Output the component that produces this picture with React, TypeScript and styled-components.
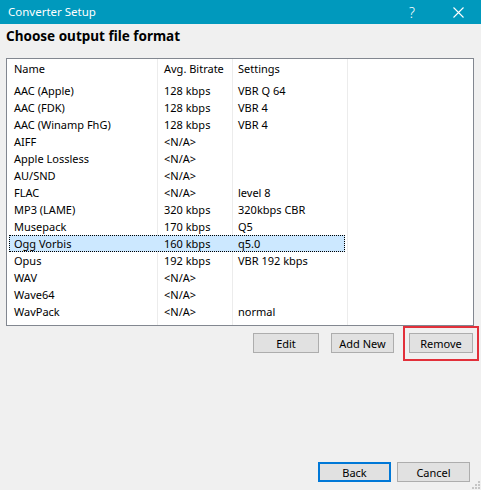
import React, { FC } from 'react';
import styled, { createGlobalStyle } from 'styled-components';

interface Format {
  name: string;
  bitrate: string;
  settings: string;
}

const formats: Format[] = [
  { name: 'AAC (Apple)', bitrate: '128 kbps', settings: 'VBR Q 64' },
  { name: 'AAC (FDK)', bitrate: '128 kbps', settings: 'VBR 4' },
  { name: 'AAC (Winamp FhG)', bitrate: '128 kbps', settings: 'VBR 4' },
  { name: 'AIFF', bitrate: '<N/A>', settings: '' },
  { name: 'Apple Lossless', bitrate: '<N/A>', settings: '' },
  { name: 'AU/SND', bitrate: '<N/A>', settings: '' },
  { name: 'FLAC', bitrate: '<N/A>', settings: 'level 8' },
  { name: 'MP3 (LAME)', bitrate: '320 kbps', settings: '320kbps CBR' },
  { name: 'Musepack', bitrate: '170 kbps', settings: 'Q5' },
  { name: 'Ogg Vorbis', bitrate: '160 kbps', settings: 'q5.0' },
  { name: 'Opus', bitrate: '192 kbps', settings: 'VBR 192 kbps' },
  { name: 'WAV', bitrate: '<N/A>', settings: '' },
  { name: 'Wave64', bitrate: '<N/A>', settings: '' },
  { name: 'WavPack', bitrate: '<N/A>', settings: 'normal' },
];

const selected = 'Ogg Vorbis';

const App: FC = () => (
  <>
    <GlobalStyle />
    <Window>
      <TitleBar>
        <Title>Converter Setup</Title>
        <TitleButtons>
          <TitleButton>?</TitleButton>
          <TitleButton>
            <svg width="11" height="11" viewBox="0 0 11 11">
              <path d="M0.5 0.5 L10.5 10.5 M10.5 0.5 L0.5 10.5" stroke="#fff" strokeWidth="1.1" />
            </svg>
          </TitleButton>
        </TitleButtons>
      </TitleBar>

      <Content>
        <Heading>Choose output file format</Heading>

        <ListBox>
          <Row>
            <Cell pad={5}>Name</Cell>
            <Cell pad={7}>Avg. Bitrate</Cell>
            <Cell pad={6}>Settings</Cell>
          </Row>
          <HeaderGap />
          {formats.map(f => (
            <Row key={f.name} isSelected={f.name === selected}>
              <Cell pad={5}>{f.name}</Cell>
              <Cell pad={7}>{f.bitrate}</Cell>
              <Cell pad={6}>{f.settings}</Cell>
            </Row>
          ))}
        </ListBox>

        <ActionRow>
          <Button width={66}>Edit</Button>
          <Button width={63}>Add New</Button>
          <Highlight>
            <Button width={64}>Remove</Button>
          </Highlight>
        </ActionRow>

        <Spacer />

        <FooterRow>
          <Button width={73} isDefault>
            Back
          </Button>
          <Button width={73}>Cancel</Button>
        </FooterRow>
      </Content>
      <Grip>
        <svg width="10" height="10" viewBox="0 0 10 10">
          {[
            [8, 2],
            [5, 5],
            [8, 5],
            [2, 8],
            [5, 8],
            [8, 8],
          ].map(([x, y]) => (
            <rect key={`${x}-${y}`} x={x} y={y} width="2" height="2" fill="#c5c5c5" />
          ))}
        </svg>
      </Grip>
    </Window>
  </>
);

export default App;

const GlobalStyle = createGlobalStyle`
  html, body {
    margin: 0;
    padding: 0;
    background: #f0f0f0;
  }
  body {
    font-family: "Noto Sans", "Open Sans", sans-serif;
    font-size: 11px;
    color: #000;
  }
`;

const Window = styled.div`
  position: relative;
  width: 481px;
  height: 490px;
  display: flex;
  flex-direction: column;
  background: #f0f0f0;
  overflow: hidden;
`;

const TitleBar = styled.div`
  height: 24px;
  flex: none;
  background: #0099bd;
  color: #fff;
  display: flex;
  align-items: center;
  justify-content: space-between;
  padding-left: 8px;
`;

const Title = styled.div`
  font-size: 11.5px;
  line-height: 24px;
`;

const TitleButtons = styled.div`
  display: flex;
  height: 100%;
`;

const TitleButton = styled.div`
  width: 46px;
  display: flex;
  align-items: center;
  justify-content: center;
  font-size: 14px;
  font-weight: 300;
`;

const Content = styled.div`
  flex: 1;
  display: flex;
  flex-direction: column;
  padding: 0 0 8px 6px;
`;

const Heading = styled.h1`
  margin: 0;
  height: 34px;
  line-height: 25px;
  font-size: 13.5px;
  font-weight: 700;
  box-sizing: border-box;
`;

const ListBox = styled.div`
  width: 468px;
  height: 268px;
  box-sizing: border-box;
  border: 1px solid #828790;
  background-color: #fff;
  background-image: linear-gradient(#ececec, #ececec), linear-gradient(#ececec, #ececec),
    linear-gradient(#ececec, #ececec);
  background-size: 1px 100%;
  background-repeat: no-repeat;
  background-position: 150px 0, 225px 0, 340px 0;
  padding: 1px 0 0 2px;
  display: flex;
  flex-direction: column;
`;

const HeaderGap = styled.div`
  height: 5px;
`;

const Row = styled.div<{ isSelected?: boolean }>`
  display: grid;
  grid-template-columns: 148px 75px 113px;
  width: 336px;
  height: 17px;
  box-sizing: border-box;
  align-items: center;
  background: ${p => (p.isSelected ? '#cce8ff' : 'transparent')};
  outline: ${p => (p.isSelected ? '1px dotted #000' : 'none')};
  outline-offset: -1px;
`;

const Cell = styled.div<{ pad: number }>`
  padding-left: ${p => p.pad}px;
  white-space: nowrap;
  line-height: 17px;
`;

const ActionRow = styled.div`
  display: flex;
  justify-content: flex-end;
  align-items: flex-start;
  gap: 12px;
  padding-right: 2px;
`;

const Highlight = styled.div`
  margin-left: -3px;
  border: 2px solid #e2303a;
  padding: 5px 4px 6px 4px;
`;

const Button = styled.button<{ width: number; isDefault?: boolean }>`
  width: ${p => p.width}px;
  height: 20px;
  margin-top: 7px;
  box-sizing: border-box;
  background: #e1e1e1;
  border: ${p => (p.isDefault ? '2px solid #0078d7' : '1px solid #adadad')};
  font-family: "Noto Sans", "Open Sans", sans-serif;
  font-size: 11px;
  color: #000;
  padding: 0;
  line-height: 1;
  ${Highlight} & {
    margin-top: 0;
  }
`;

const Spacer = styled.div`
  flex: 1;
`;

const FooterRow = styled.div`
  display: flex;
  justify-content: flex-end;
  gap: 6px;
  padding-right: 11px;
`;

const Grip = styled.div`
  position: absolute;
  right: 1px;
  bottom: 1px;
  line-height: 0;
`;
